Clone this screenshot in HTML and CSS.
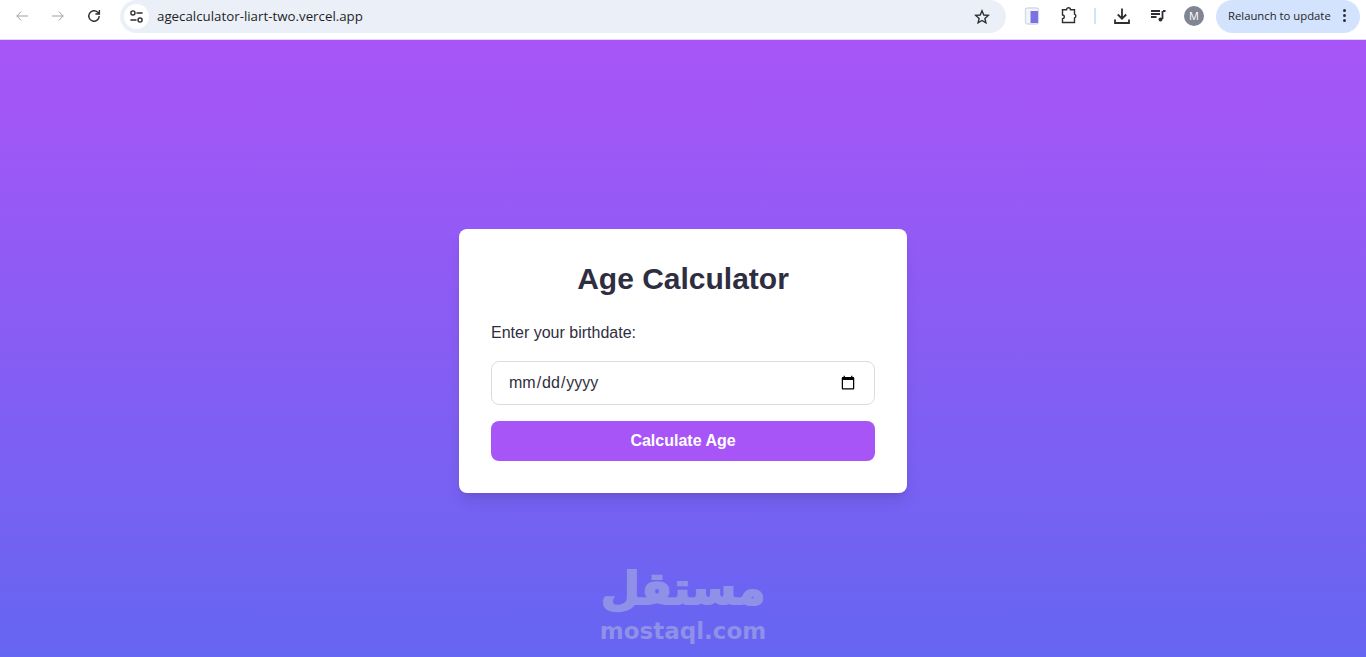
FILE: index.html
```html
<!DOCTYPE html>
<html>

<head>
  <title>Age Calculator</title>

  <link rel="stylesheet" href="styles.css">
</head>

<body>
  <!-- Browser toolbar -->
  <div class="toolbar">
    <div class="tool-btn">
      <svg width="14" height="14" viewBox="0 0 16 16" class="icon-faded"><path d="M15 8H2M7 3 2 8l5 5" /></svg>
    </div>
    <div class="tool-btn">
      <svg width="14" height="14" viewBox="0 0 16 16" class="icon-faded"><path d="M1 8h13M9 3l5 5-5 5" /></svg>
    </div>
    <div class="tool-btn">
      <svg width="16" height="16" viewBox="0 0 16 16" class="icon-dark"><path d="M13.2 8a5.2 5.2 0 1 1-1.500-3.700L13.400 6M13.400 2v4h-4" /></svg>
    </div>

    <div class="address-bar">
      <div class="site-badge">
        <svg width="15" height="15" viewBox="0 0 16 16" class="icon-dark thin">
          <circle cx="4.200" cy="4.200" r="2.200" />
          <path d="M8 4.200h6.500M1.500 11.800H8" />
          <circle cx="11.800" cy="11.800" r="2.200" />
        </svg>
      </div>
      <span class="url">agecalculator-liart-two.vercel.app</span>
      <svg width="16" height="16" viewBox="0 0 16 16" class="icon-dark star">
        <path d="M8 1.800 9.800 6l4.500.4-3.400 3 1 4.400L8 11.500l-3.900 2.300 1-4.400-3.400-3L6.200 6z" />
      </svg>
    </div>

    <div class="tool-btn first-ext">
      <svg width="16" height="18" viewBox="0 0 16 18">
        <rect x="1.500" y="1" width="13" height="16" rx="2" fill="#F3F5FA" stroke="#D5DAE4" />
        <rect x="6.500" y="4" width="7.500" height="12" fill="#7A72E0" />
      </svg>
    </div>
    <div class="tool-btn ext-gap">
      <svg width="18" height="18" viewBox="0 0 18 18" class="icon-dark">
        <path d="M2.500 2.800h4a2 2 0 0 1 4 0h4v4.400a2 2 0 0 1 0 3.800v4.500h-12v-3.900a1.800 1.800 0 0 0 0-3.600z" />
      </svg>
    </div>
    <div class="divider"></div>
    <div class="tool-btn">
      <svg width="18" height="18" viewBox="0 0 18 18" class="icon-dark bold">
        <path d="M9 1.500v10M4.800 7.500 9 11.700l4.200-4.200M2 12.500v3.500h14v-3.500" />
      </svg>
    </div>
    <div class="tool-btn">
      <svg width="16" height="16" viewBox="0 0 16 16" class="icon-dark bold">
        <path d="M1 3h9M1 6h9M1 9h5.500M13 3h2.500M12.500 3v8" />
        <circle cx="10.500" cy="11.500" r="2" class="solid" />
      </svg>
    </div>
    <div class="tool-btn">
      <div class="avatar">M</div>
    </div>
    <div class="relaunch">
      <span>Relaunch to update</span>
      <div class="dots">
        <i></i>
        <i></i>
        <i></i>
      </div>
    </div>
  </div>

  <div class="page">
    <div class="card">
      <h1 class="title">Age Calculator</h1>
      <label class="field-label" for="birthdate">Enter your birthdate:</label>
      <input class="date-input" id="birthdate" type="date">
      <button class="calc-btn">Calculate Age</button>
    </div>

    <!-- Watermark over the page -->
    <div class="watermark">
      <div class="watermark-ar" lang="ar" dir="rtl">مستقل</div>
      <div class="watermark-en">mostaql.com</div>
    </div>
  </div>
</body>

</html>
```

FILE: styles.css
```css
html,
body {
  margin: 0;
  padding: 0;
  height: 657px;
  overflow: hidden;
  background: #FFFFFF;
  font-family: "Liberation Sans", Arial, sans-serif;
}

/* Browser toolbar */
.toolbar {
  display: flex;
  align-items: flex-start;
  height: 39px;
  padding-left: 4px;
  background: #FFFFFF;
  border-bottom: 1px solid #E4D4FB;
}

.tool-btn {
  display: flex;
  align-items: center;
  justify-content: center;
  flex: none;
  width: 36px;
  height: 32px;
}

.tool-btn svg,
.address-bar svg {
  fill: none;
  stroke-width: 1.4;
}

.icon-faded {
  stroke: #9A9DA1;
}

.tool-btn .icon-faded {
  stroke-width: 1.1;
}

.icon-dark {
  stroke: #2B2F33;
}

.address-bar .icon-dark.thin {
  stroke-width: 1.5;
}

.tool-btn .icon-dark.bold {
  stroke-width: 1.8;
}

.icon-dark .solid {
  fill: #2B2F33;
  stroke: none;
}

.address-bar {
  display: flex;
  align-items: center;
  flex: none;
  width: 886px;
  height: 33px;
  margin-left: 8px;
  background: #EBF0F8;
  border-radius: 17px;
}

.site-badge {
  display: flex;
  align-items: center;
  justify-content: center;
  width: 25px;
  height: 25px;
  margin-left: 4px;
  background: #FFFFFF;
  border-radius: 50%;
}

.url {
  margin-left: 8px;
  margin-top: -2px;
  font-family: "Open Sans", sans-serif;
  font-size: 13.300px;
  color: #1F1F1F;
}

.star {
  margin-left: auto;
  margin-right: 16px;
}

.first-ext {
  margin-left: 8px;
}

.ext-gap {
  margin-left: 1px;
}

.divider {
  flex: none;
  width: 2px;
  height: 16px;
  margin: 8px 8px 0 7px;
  background: #D3E3FD;
}

.avatar {
  width: 20px;
  height: 20px;
  line-height: 20px;
  text-align: center;
  font-family: "Open Sans", sans-serif;
  font-size: 11px;
  color: #FFFFFF;
  background: #7F8691;
  border-radius: 50%;
}

.relaunch {
  display: flex;
  align-items: center;
  justify-content: space-between;
  flex: none;
  box-sizing: border-box;
  width: 144px;
  height: 33px;
  margin-left: 4px;
  padding: 0 14px 2px 12px;
  font-family: "Open Sans", sans-serif;
  font-size: 11.300px;
  color: #1F1F1F;
  background: #D3E3FD;
  border-radius: 17px;
}

.dots {
  display: flex;
  flex-direction: column;
  gap: 2px;
}

.dots i {
  display: block;
  width: 3px;
  height: 3px;
  background: #2B2F33;
  border-radius: 50%;
}

/* Page */
.page {
  position: relative;
  display: flex;
  align-items: center;
  justify-content: center;
  height: 642px;
  background: linear-gradient(to bottom, #A855F7, #6366F1);
}

.card {
  display: flex;
  flex-direction: column;
  box-sizing: border-box;
  width: 448px;
  padding: 32px;
  background: #FFFFFF;
  border-radius: 8px;
  box-shadow: 0 10px 15px -3px rgba(0, 0, 0, 0.1), 0 4px 6px -4px rgba(0, 0, 0, 0.1);
}

.title {
  margin: 0 0 24px;
  font-size: 30px;
  line-height: 36px;
  font-weight: 700;
  text-align: center;
  color: #2F2E41;
}

.field-label {
  margin-bottom: 16px;
  font-size: 16px;
  line-height: 24px;
  color: #2F2E41;
}

.date-input {
  box-sizing: border-box;
  width: 100%;
  height: 44px;
  margin-bottom: 16px;
  padding: 8px 16px;
  font-family: inherit;
  font-size: 16px;
  color: #2F2E41;
  background: #FFFFFF;
  border: 1px solid #DCDCE0;
  border-radius: 8px;
}

.calc-btn {
  height: 40px;
  padding: 0;
  font-family: inherit;
  font-size: 16px;
  font-weight: 700;
  color: #FFFFFF;
  background: #A855F7;
  border: none;
  border-radius: 8px;
}

.watermark {
  position: absolute;
  left: 0;
  right: 0;
  top: 519px;
  text-align: center;
  color: #8F90E8;
  font-weight: 700;
  font-family: "DejaVu Sans", sans-serif;
}

.watermark-ar {
  height: 60px;
  font-size: 45px;
  line-height: 60px;
  -webkit-text-stroke: 2px #8F90E8;
}

.watermark-en {
  margin-top: -2px;
  font-size: 23px;
  line-height: 28px;
}
```
